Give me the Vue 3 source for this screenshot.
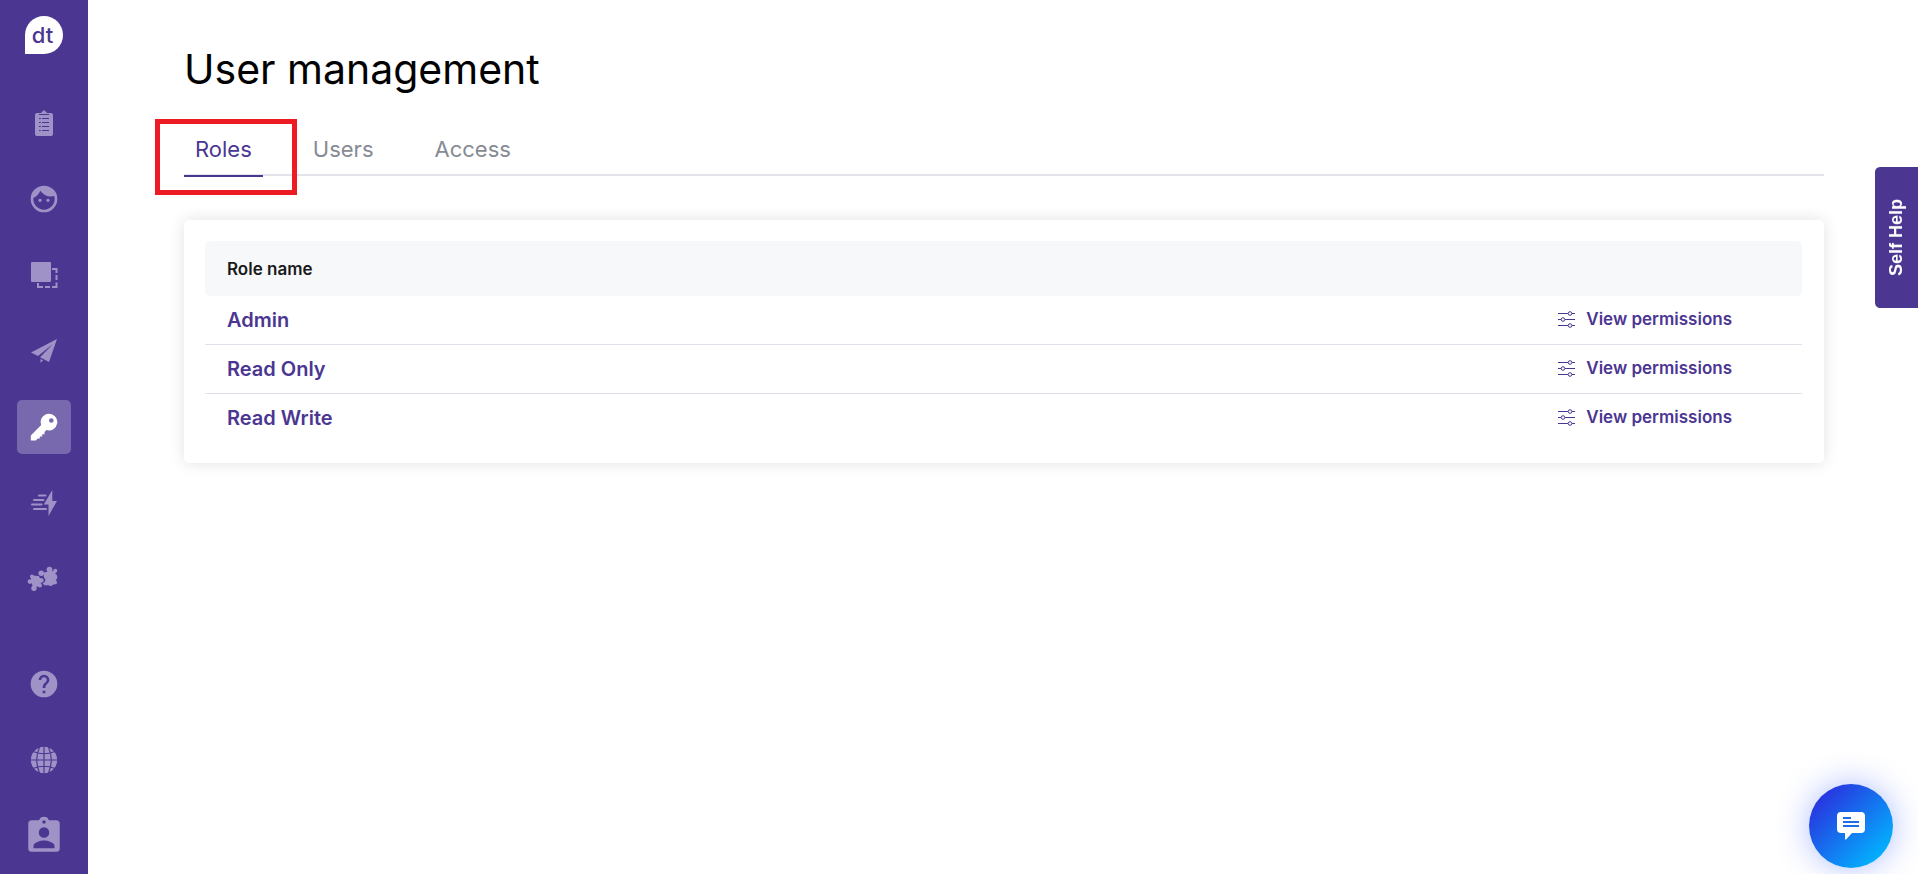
<script setup>
import { ref } from 'vue'

const tabs = ['Roles', 'Users', 'Access']
const activeTab = ref('Roles')

const roles = ['Admin', 'Read Only', 'Read Write']

// top part of the side menu
const mainMenu = [
  { id: 'clipboard', label: 'Reports' },
  { id: 'face', label: 'Customers' },
  { id: 'layers', label: 'Segments' },
  { id: 'plane', label: 'Campaigns' },
  { id: 'key', label: 'User management' },
  { id: 'bolt', label: 'Automation' },
  { id: 'puzzle', label: 'Integrations' }
]

// bottom part of the side menu
const footerMenu = [
  { id: 'help', label: 'Help' },
  { id: 'globe', label: 'Language' },
  { id: 'badge', label: 'Account' }
]

const activeMenu = ref('key')
</script>

<template>
  <div class="layout">
    <aside class="sidebar">
      <a href="#" class="logo">dt</a>

      <nav class="menu">
        <button
          v-for="item in mainMenu"
          :key="item.id"
          class="menu-btn"
          :class="{ active: activeMenu === item.id }"
          :aria-label="item.label"
          @click="activeMenu = item.id"
        >
          <svg v-if="item.id === 'clipboard'" width="18" height="26" viewBox="0 0 18 26">
            <path fill="currentColor" d="M2 3h4.500V1.800h1A1.600 1.600 0 0 1 9 .3a1.600 1.600 0 0 1 1.500 1.500h1V3H16a2 2 0 0 1 2 2v19a2 2 0 0 1-2 2H2a2 2 0 0 1-2-2V5a2 2 0 0 1 2-2z" />
            <path class="cut" stroke-width="1" d="M4 4.500h10M4 8.500h1.800M7 8.500h7M4 12.500h1.800M7 12.500h7M4 16.500h1.800M7 16.500h7M4 20.500h1.800M7 20.500h7" />
          </svg>
          <svg v-else-if="item.id === 'face'" width="32" height="32" viewBox="0 0 24 24">
            <path fill="currentColor" d="M9 11.750a1.250 1.250 0 1 0 0 2.500 1.250 1.250 0 0 0 0-2.500zm6 0a1.250 1.250 0 1 0 0 2.500 1.250 1.250 0 0 0 0-2.500zM12 2a10 10 0 1 0 0 20 10 10 0 0 0 0-20zm0 18c-4.410 0-8-3.590-8-8 0-.29.02-.58.05-.86 2.360-1.050 4.230-2.980 5.210-5.370a9.974 9.974 0 0 0 10.410 3.970c.21.710.330 1.470.330 2.260 0 4.410-3.590 8-8 8z" />
          </svg>
          <svg v-else-if="item.id === 'layers'" width="28" height="28" viewBox="0 0 28 28">
            <rect x="1" y="1" width="20" height="20" rx="1" fill="currentColor" />
            <path fill="none" stroke="currentColor" stroke-width="2" d="M22 8h4.500v4M26.500 14v5M26.500 21.500v4.500H22M20 26h-5M13 26H8v-4" />
          </svg>
          <svg v-else-if="item.id === 'plane'" width="28" height="26" viewBox="0 0 28 26">
            <path fill="currentColor" d="M27 1 1 14.500l7 3.600L23 6 10 19.200l9 4.800zM10.500 21v3.800l2.600-2.300z" />
          </svg>
          <svg v-else-if="item.id === 'key'" width="28" height="28" viewBox="0 0 28 28">
            <path fill="currentColor" fill-rule="evenodd" d="M19 .8a8.300 8.300 0 1 1-2.500 16.200L14.500 19v2.200h-2.300v2.200H9.800v2.100H7.600L6 27.400H.8v-4.900L11.200 12A8.300 8.300 0 0 1 19 .8zm2.300 4.400a2.300 2.300 0 1 0 0 4.600 2.300 2.300 0 0 0 0-4.600z" />
          </svg>
          <svg v-else-if="item.id === 'bolt'" width="28" height="28" viewBox="0 0 28 28">
            <path fill="currentColor" d="M22.300 1 13.800 15.500h4.700V27L27 12h-4.700z" />
            <path fill="none" stroke="currentColor" stroke-width="2" stroke-linecap="round" d="M9 6.500h6.500M4 11h9.500M2 15.500h9.500M4 20h12" />
          </svg>
          <svg v-else-if="item.id === 'puzzle'" width="34" height="26" viewBox="0 0 34 26">
            <g fill="currentColor">
              <path d="m16.500 6.500 12.500-2-1 6 1.500 7.500-12 1.500-.5-4.500z" />
              <circle cx="22.500" cy="3.600" r="2.900" />
              <circle cx="28.300" cy="4.800" r="2" />
              <circle cx="27.300" cy="11" r="3" />
              <circle cx="28" cy="16.300" r="2" />
              <circle cx="23.600" cy="17.200" r="2.700" />
              <circle cx="17.500" cy="16.800" r="2" />
              <circle cx="14.200" cy="7.300" r="2.700" />
              <path d="m3.500 9.500 8.500.5 1.500 3.500.5 6.500-8 1.200-1.500-5z" />
              <circle cx="5" cy="10.600" r="2" />
              <circle cx="3" cy="15.600" r="2.400" />
              <circle cx="7" cy="22.300" r="2.700" />
              <circle cx="13" cy="19.500" r="2" />
              <circle cx="14.200" cy="14.500" r="2.400" />
            </g>
            <path class="cut" stroke-width="1.200" stroke-linecap="round" d="M12.500 10.500q3 .2 3.500 1.300 2.300 1 1.500 3.200-.6 1.200-2 1.500" />
          </svg>
        </button>
      </nav>

      <nav class="menu footer-menu">
        <button v-for="item in footerMenu" :key="item.id" class="menu-btn" :aria-label="item.label">
          <svg v-if="item.id === 'help'" width="32" height="32" viewBox="0 0 24 24">
            <path fill="currentColor" d="M12 2a10 10 0 1 0 0 20 10 10 0 0 0 0-20zm1 17h-2v-2h2v2zm2.070-7.750-.9.920C13.450 12.900 13 13.500 13 15h-2v-.5c0-1.100.450-2.100 1.170-2.830l1.240-1.260c.370-.360.590-.860.590-1.410a2 2 0 1 0-4 0H8a4 4 0 1 1 8 0c0 .880-.360 1.680-.930 2.250z" />
          </svg>
          <svg v-else-if="item.id === 'globe'" width="28" height="28" viewBox="0 0 28 28">
            <circle cx="14" cy="14" r="13.200" fill="currentColor" />
            <path class="cut" stroke-width="1.200" d="M14 0v28M0 14h28M3 5.500q11 4.500 22 0M3 22.500q11-4.500 22 0M9.500 1q-5.500 13 0 26M18.500 1q5.500 13 0 26" />
          </svg>
          <svg v-else width="42" height="42" viewBox="0 0 24 24">
            <path fill="currentColor" d="M19 3h-4.180a2.990 2.990 0 0 0-5.640 0H5a2 2 0 0 0-2 2v14a2 2 0 0 0 2 2h14a2 2 0 0 0 2-2V5a2 2 0 0 0-2-2zm-7 0a1 1 0 1 1 0 2 1 1 0 0 1 0-2zm0 4a3 3 0 1 1 0 6 3 3 0 0 1 0-6zm6 12H6v-1.400c0-2 4-3.100 6-3.100s6 1.100 6 3.100V19z" />
          </svg>
        </button>
      </nav>
    </aside>

    <main class="content">
      <h1 class="title">User management</h1>

      <div class="tabs" role="tablist">
        <button
          v-for="tab in tabs"
          :key="tab"
          class="tab"
          :class="{ active: activeTab === tab }"
          role="tab"
          :aria-selected="activeTab === tab"
          @click="activeTab = tab"
        >{{ tab }}</button>
        <span class="highlight"></span>
      </div>

      <section class="card">
        <table class="roles">
          <thead>
            <tr>
              <th colspan="2">Role name</th>
            </tr>
          </thead>
          <tbody>
            <tr v-for="role in roles" :key="role">
              <td class="role-name">{{ role }}</td>
              <td class="role-action">
                <a href="#" class="permissions">
                  <svg width="17" height="18" viewBox="0 0 17 18" fill="none" stroke="currentColor" stroke-width="1">
                    <path d="M0 3.500h10M14 3.500h3M0 9.500h3M7 9.500h10M0 15.500h10M14 15.500h3" />
                    <circle cx="12" cy="3.500" r="1.800" />
                    <circle cx="5" cy="9.500" r="1.800" />
                    <circle cx="12" cy="15.500" r="1.800" />
                  </svg>
                  <span>View permissions</span>
                </a>
              </td>
            </tr>
          </tbody>
        </table>
      </section>
    </main>

    <button class="self-help">Self Help</button>

    <button class="chat" aria-label="Chat">
      <svg width="28" height="28" viewBox="0 0 28 28">
        <path fill="#fff" d="M4 0h20a4 4 0 0 1 4 4v13a4 4 0 0 1-4 4h-9l-6 6.500q-1 .5-1-1V21H4a4 4 0 0 1-4-4V4a4 4 0 0 1 4-4z" />
        <path stroke="#1e6fe6" stroke-width="2" d="M6 6h8M6 10h16M6 14h16" />
      </svg>
    </button>
  </div>
</template>

<style>
body {
  margin: 0;
  background: #fff;
}
</style>

<style scoped>
.layout {
  display: flex;
  min-height: 100vh;
  font-family: Inter, "Liberation Sans", sans-serif;
}
button {
  border: 0;
  padding: 0;
  background: none;
  font-family: inherit;
  cursor: pointer;
}

/* side menu */
.sidebar {
  box-sizing: border-box;
  flex: 0 0 88px;
  display: flex;
  flex-direction: column;
  align-items: center;
  padding: 16px 0 11px;
  background: #4b3692;
}
.logo {
  box-sizing: border-box;
  width: 38px;
  height: 38px;
  margin-bottom: 42px;
  padding-right: 3px;
  border-radius: 50% 50% 50% 0;
  background: #fff;
  color: #4b3692;
  font-size: 22px;
  font-weight: 500;
  line-height: 38px;
  text-align: center;
  text-decoration: none;
}
.menu {
  display: flex;
  flex-direction: column;
  gap: 22px;
}
.footer-menu {
  margin-top: auto;
}
.menu-btn {
  display: flex;
  align-items: center;
  justify-content: center;
  width: 54px;
  height: 54px;
  border-radius: 5px;
  color: #9f92c7;
}
.menu-btn.active {
  background: #7868ad;
  color: #fff;
}
.cut {
  fill: none;
  stroke: #4b3692;
}

/* main area */
.content {
  flex: 1;
  min-width: 0;
  padding: 44px 94px 40px 96px;
}
.title {
  margin: 0;
  color: #000;
  font-size: 41px;
  font-weight: 400;
  line-height: 50px;
}
.tabs {
  position: relative;
  display: flex;
  gap: 39px;
  margin-top: 36px;
  border-bottom: 2px solid #e3e3ea;
}
.tab {
  height: 47px;
  margin-bottom: -3px;
  padding: 0 11px 8px;
  border-bottom: 2px solid transparent;
  color: #868b94;
  font-size: 22px;
  line-height: 36px;
}
.tab.active {
  border-bottom-color: #4b3692;
  color: #4b3692;
}
.highlight {
  position: absolute;
  top: -11px;
  left: -29px;
  box-sizing: border-box;
  width: 142px;
  height: 76px;
  border: 5px solid #ed1c24;
  pointer-events: none;
}
.card {
  margin-top: 44px;
  padding: 21px 22px 20px 21px;
  border-radius: 5px;
  background: #fff;
  box-shadow: 0 0 16px rgba(0, 0, 0, 0.12);
}
.roles {
  width: 100%;
  border-spacing: 0;
}
.roles th {
  height: 55px;
  padding: 0 22px;
  border-radius: 5px;
  background: #f7f8fa;
  color: #1a1a1a;
  font-size: 17px;
  font-weight: 600;
  text-align: left;
}
.roles td {
  height: 48px;
  padding: 0 22px;
  border-bottom: 1px solid #e0e1ea;
}
.roles tr:last-child td {
  border-bottom-color: transparent;
}
.role-name {
  color: #4b3692;
  font-size: 20px;
  font-weight: 600;
}
.roles .role-action {
  height: 46px;
  padding: 0 70px 2px 22px;
}
.permissions {
  display: flex;
  align-items: center;
  justify-content: flex-end;
  gap: 11px;
  color: #4b3692;
  font-size: 17px;
  font-weight: 600;
  text-decoration: none;
}

/* floating widgets */
.self-help {
  position: fixed;
  top: 167px;
  right: 0;
  width: 43px;
  height: 141px;
  border-radius: 0 5px 5px 0;
  background: #4b3692;
  color: #fff;
  font-family: "Liberation Sans", Arial, sans-serif;
  font-size: 18px;
  font-weight: 700;
  writing-mode: vertical-rl;
  transform: rotate(180deg);
}
.chat {
  position: fixed;
  right: 25px;
  bottom: 6px;
  display: flex;
  align-items: center;
  justify-content: center;
  width: 84px;
  height: 84px;
  border-radius: 50%;
  background: linear-gradient(135deg, #2a2ede 10%, #00b8ff 90%);
  box-shadow: 0 0 32px rgba(50, 90, 255, 0.4);
}
</style>
